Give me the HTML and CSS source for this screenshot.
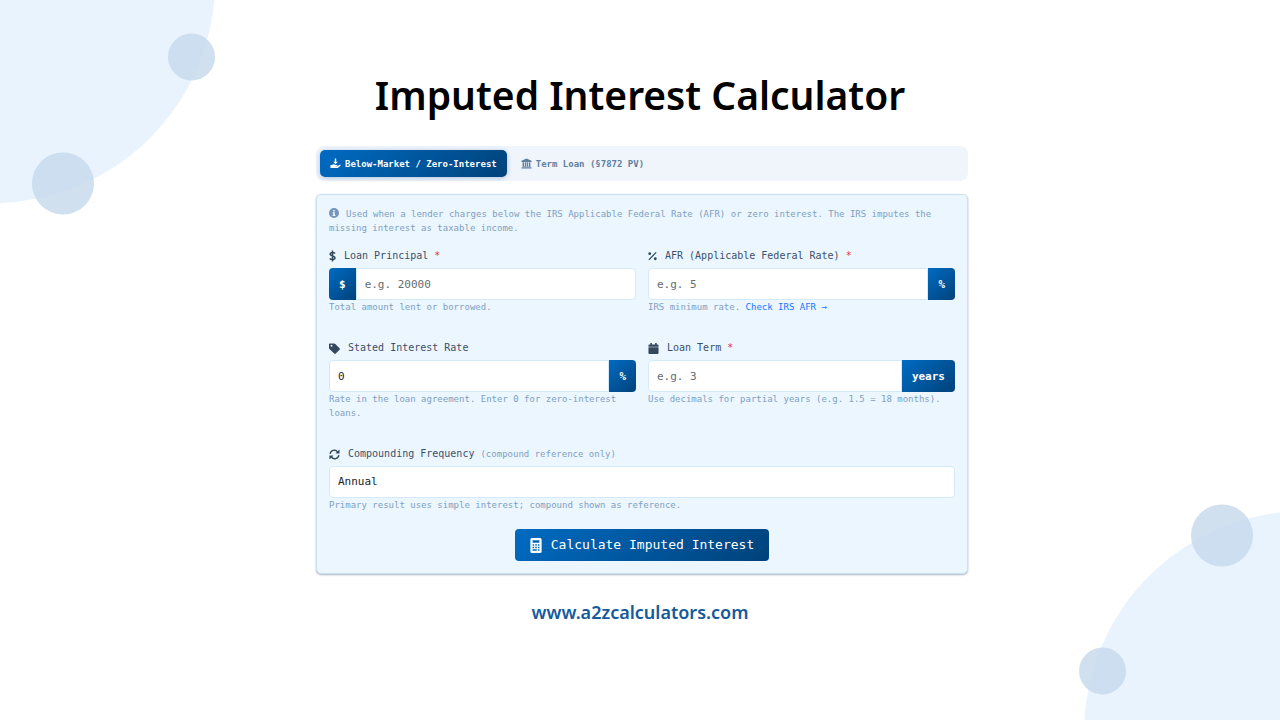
FILE: index.html
```html
<!DOCTYPE html>
<html lang="en">
<head>
<meta charset="utf-8">
<meta name="viewport" content="width=device-width, initial-scale=1">
<title>Imputed Interest Calculator</title>
<link rel="stylesheet" href="styles.css">
</head>
<body>
<svg class="bubbles bubbles-top" width="230" height="230" viewBox="0 0 230 230" aria-hidden="true">
  <circle class="bubble-large" cx="-7" cy="-19" r="222"/>
  <circle class="bubble-small" cx="63" cy="183.5" r="31"/>
  <circle class="bubble-small" cx="191.500" cy="57" r="23.500"/>
</svg>
<svg class="bubbles bubbles-bottom" width="230" height="230" viewBox="0 0 230 230" aria-hidden="true">
  <circle class="bubble-large" cx="256" cy="243" r="222"/>
  <circle class="bubble-small" cx="172" cy="45.500" r="31"/>
  <circle class="bubble-small" cx="52.500" cy="181" r="23.500"/>
</svg>

<main class="page">
  <h1 class="title">Imputed Interest Calculator</h1>

  <div class="calculator">
    <div class="tabs" role="tablist">
      <button class="tab tab-active" type="button" role="tab" aria-selected="true">
        <svg class="icon-tab" viewBox="0 0 24 24" aria-hidden="true"><path d="M10.500 1h3v7h3.500l-5 5.500L7 8h3.500z"/><path d="M1 15h3.500c1.500-1.400 4-1.700 6-.5l1.500.5h3.500c1.500 0 1.500 2.200 0 2.200h-4v.8h5l4.500-3.200c1.800-1 3 .9 1.700 2.200L17 22H1z"/></svg>
        Below-Market / Zero-Interest
      </button>
      <button class="tab" type="button" role="tab" aria-selected="false">
        <svg class="icon-tab" viewBox="0 0 24 24" aria-hidden="true"><path d="M12 1 1 6v2.500h22V6zM3.500 9.500H7V18H3.500zM8.700 9.500h2.600V18H8.700zM12.700 9.500h2.600V18h-2.600zM17 9.500h3.500V18H17zM2.500 18.500h19V20h-19zM1 20.500h22V23H1z"/></svg>
        Term Loan (§7872 PV)
      </button>
    </div>

    <form class="panel">
      <p class="intro"><svg class="icon-info" viewBox="0 0 24 24" aria-hidden="true"><circle cx="12" cy="12" r="12"/><path class="cutout" d="M10 4.500h4v3.600h-4zM8.500 10H14v6.500h1.500V19h-7v-2.500H10v-4H8.500z"/></svg>Used when a lender charges below the IRS Applicable Federal Rate (AFR) or zero interest. The IRS imputes the missing interest as taxable income.</p>

      <div class="fields">
        <div class="field">
          <label class="label" for="principal">
            <svg class="icon icon-narrow" viewBox="0 0 14 24" aria-hidden="true"><path class="stroke" d="M7 1v22M12 7C10 4.500 2.500 4 2.500 8.300c0 4.700 9.500 2.500 9.500 7.400 0 4.700-8 4.300-10.500 1.500"/></svg>
            <span>Loan Principal <span class="required">*</span></span>
          </label>
          <div class="group">
            <span class="addon">$</span>
            <input class="input" id="principal" type="text" placeholder="e.g. 20000">
          </div>
          <p class="help">Total amount lent or borrowed.</p>
        </div>

        <div class="field">
          <label class="label" for="afr">
            <svg class="icon" viewBox="1 1 21 21" aria-hidden="true"><path class="stroke" d="M3 20.500l17-17.500"/><circle cx="5" cy="6" r="3.300"/><circle cx="18" cy="18" r="3.300"/></svg>
            <span>AFR (Applicable Federal Rate) <span class="required">*</span></span>
          </label>
          <div class="group">
            <input class="input" id="afr" type="text" placeholder="e.g. 5">
            <span class="addon">%</span>
          </div>
          <p class="help">IRS minimum rate. <a class="help-link" href="#afr">Check IRS AFR →</a></p>
        </div>

        <div class="field">
          <label class="label" for="stated">
            <svg class="icon icon-wide" viewBox="0 0 24 24" aria-hidden="true"><path fill-rule="evenodd" d="M0 2.500Q0 1 1.500 1h9.700q1.500 0 2.600 1L23 11.200q1.700 1.700 0 3.400L14.700 23q-1.700 1.500-3.400 0L1 13Q0 12 0 10.500zM5.500 4a2.100 2.100 0 1 0 0 4.200 2.100 2.100 0 0 0 0-4.200z"/></svg>
            <span>Stated Interest Rate</span>
          </label>
          <div class="group">
            <input class="input" id="stated" type="text" value="0">
            <span class="addon">%</span>
          </div>
          <p class="help">Rate in the loan agreement. Enter 0 for zero-interest loans.</p>
        </div>

        <div class="field">
          <label class="label" for="term">
            <svg class="icon icon-wide" viewBox="0 0 24 24" aria-hidden="true"><path d="M5 0h3.500v3h7V0H19v3h2q2 0 2 2v3H1V5q0-2 2-2h2zM1 9.500h22V22q0 2-2 2H3q-2 0-2-2z"/></svg>
            <span>Loan Term <span class="required">*</span></span>
          </label>
          <div class="group">
            <input class="input" id="term" type="text" placeholder="e.g. 3">
            <span class="addon">years</span>
          </div>
          <p class="help">Use decimals for partial years (e.g. 1.5 = 18 months).</p>
        </div>

        <div class="field field-full">
          <label class="label" for="frequency">
            <svg class="icon icon-wide" viewBox="0 0 24 24" aria-hidden="true"><path class="stroke" d="M2.500 10.500C3.500 2.500 14 0 19 6.500M21.500 13.500C20.500 21.500 10 24 5 17.500"/><path d="M23 1v9h-9zM1 23v-9h9z"/></svg>
            <span>Compounding Frequency <span class="note">(compound reference only)</span></span>
          </label>
          <select class="input select" id="frequency">
            <option>Annual</option>
          </select>
          <p class="help">Primary result uses simple interest; compound shown as reference.</p>
        </div>
      </div>

      <button class="submit" type="button">
        <svg class="icon-submit" viewBox="0 0 18 24" aria-hidden="true"><path fill-rule="evenodd" d="M2.500 0h13Q18 0 18 2.500v19q0 2.500-2.500 2.500h-13Q0 24 0 21.500v-19Q0 0 2.500 0zM3.500 3.500v4h11v-4zM3.500 10v2.500H6V10zM7.800 10v2.500h2.500V10zM12 10v2.500h2.500V10zM3.500 14v2.500H6V14zM7.800 14v2.500h2.500V14zM12 14v2.500h2.500V14zM3.500 18v2.500h6.800V18zM12 18v2.500h2.500V18z"/></svg>
        Calculate Imputed Interest
      </button>
    </form>
  </div>

  <a class="site-link" href="#top">www.a2zcalculators.com</a>
</main>
</body>
</html>
```
FILE: styles.css
```css
* {
  box-sizing: border-box;
}

body {
  margin: 0;
  min-height: 100vh;
  position: relative;
  overflow-x: hidden;
  background: #fff;
  font-family: "DejaVu Sans Mono", monospace;
}

.bubbles {
  position: absolute;
  z-index: -1;
}

.bubbles-top {
  top: 0;
  left: 0;
}

.bubbles-bottom {
  right: 0;
  bottom: 0;
}

.bubble-large {
  fill: #e8f3fd;
}

.bubble-small {
  fill: rgba(196, 215, 234, 0.78);
}

.page {
  display: flex;
  flex-direction: column;
  align-items: center;
  padding: 67px 16px 40px;
}

.title {
  margin: 0;
  font: 600 39px/56px "Noto Sans", sans-serif;
  color: #000;
  text-align: center;
}

.calculator {
  width: 100%;
  max-width: 656px;
  margin: 23px 0 25px;
  padding-left: 4px;
}

.tabs {
  display: flex;
  gap: 4px;
  margin-bottom: 13px;
  padding: 4px;
  border-radius: 8px;
  background: #f0f5fc;
}

.tab {
  display: flex;
  align-items: center;
  gap: 4px;
  height: 27px;
  padding: 0 10px;
  border: 0;
  border-radius: 5px;
  background: none;
  font: bold 9px/14px "DejaVu Sans Mono", monospace;
  color: #5f7f9f;
}

.tab-active {
  background: linear-gradient(135deg, #006bc2, #00427a);
  box-shadow: 0 1px 5px rgba(0, 80, 150, 0.3);
  color: #fff;
}

.icon-tab {
  width: 11px;
  height: 11px;
  fill: currentColor;
}

.panel {
  display: flex;
  flex-direction: column;
  padding: 12px;
  border: 1px solid #c9e2f3;
  border-radius: 5px;
  background: #ebf6ff;
  box-shadow: 0 1px 2px rgba(0, 40, 80, 0.35);
}

.intro {
  margin: 0 0 13px;
  font-size: 9px;
  line-height: 14px;
  color: #819fc0;
}

.icon-info {
  width: 10px;
  height: 10px;
  margin-right: 7px;
  vertical-align: -1px;
  fill: #7695ba;
}

.icon-info .cutout {
  fill: #ebf6ff;
}

.fields {
  display: grid;
  grid-template-columns: 1fr 1fr;
  gap: 26px 12px;
}

.field-full {
  grid-column: 1 / -1;
}

.label {
  display: flex;
  align-items: center;
  gap: 8px;
  margin-bottom: 4px;
  font-size: 10px;
  line-height: 16px;
  color: #3d5068;
}

.icon {
  width: 9px;
  height: 10px;
  fill: #34495e;
}

.icon-narrow {
  width: 7px;
  height: 12px;
}

.icon-wide {
  width: 11px;
  height: 11px;
}

.stroke {
  fill: none;
  stroke: #34495e;
  stroke-width: 3;
}

.required {
  color: #e5364a;
}

.note {
  font-size: 9px;
  color: #819fc0;
}

.group {
  display: flex;
}

.input {
  flex: 1;
  min-width: 0;
  height: 32px;
  padding: 0 8px;
  border: 1px solid #d3eafc;
  border-radius: 4px;
  background: #fff;
  font: 11px/16px "DejaVu Sans Mono", monospace;
  color: #212529;
}

.input::placeholder {
  color: #666c72;
  opacity: 1;
}

.input:not(:first-child) {
  border-top-left-radius: 0;
  border-bottom-left-radius: 0;
}

.group .input:first-child {
  border-top-right-radius: 0;
  border-bottom-right-radius: 0;
}

.field .select {
  display: block;
  width: 100%;
  appearance: none;
  border-radius: 4px;
}

.addon {
  display: flex;
  align-items: center;
  padding: 0 10px;
  border-radius: 0 4px 4px 0;
  background: linear-gradient(135deg, #006bc2, #00427a);
  font-size: 11px;
  font-weight: bold;
  color: #fff;
}

.addon:first-child {
  border-radius: 4px 0 0 4px;
}

.help {
  margin: 0;
  font-size: 9px;
  line-height: 14px;
  color: #819fc0;
}

.help-link {
  color: #1a75ff;
  text-decoration: none;
}

.submit {
  display: flex;
  align-items: center;
  align-self: center;
  gap: 9px;
  height: 32px;
  margin-top: 17px;
  padding: 0 15px;
  border: 0;
  border-radius: 4px;
  background: linear-gradient(135deg, #006bc2, #00427a);
  font: 13px/20px "DejaVu Sans Mono", monospace;
  color: #fff;
}

.icon-submit {
  width: 12px;
  height: 15px;
  fill: #fff;
}

.site-link {
  font: 600 18px/26px "Noto Sans", sans-serif;
  color: #155a9c;
  text-decoration: none;
}
```
